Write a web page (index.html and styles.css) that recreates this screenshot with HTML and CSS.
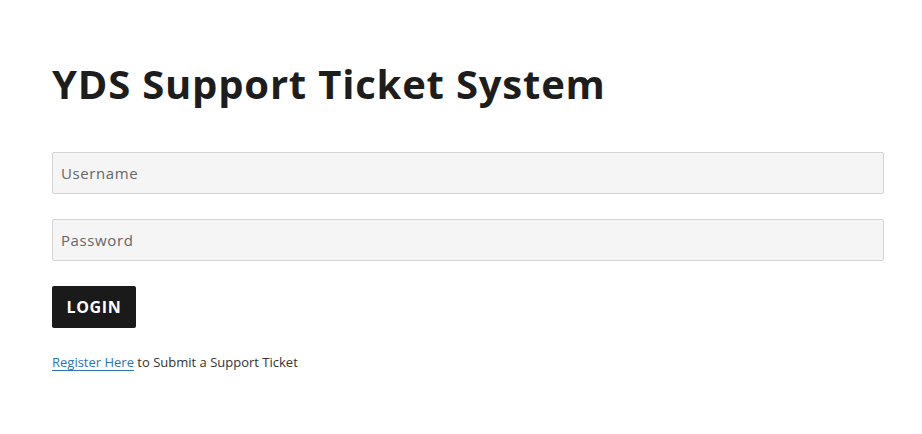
FILE: index.html
```html
<!DOCTYPE html>
<html>
<head>
<meta charset="utf-8">
<link rel="stylesheet" href="styles.css">
</head>
<body>
<main class="page">
  <h1 class="title">YDS Support Ticket System</h1>
  <form class="login-form">
    <input class="field" type="text" placeholder="Username">
    <input class="field" type="password" placeholder="Password">
    <div class="actions"><button class="btn" type="button">LOGIN</button></div>
    <p class="note"><a class="link" href="#">Register Here</a> to Submit a Support Ticket</p>
  </form>
</main>
</body>
</html>
```
FILE: styles.css
```css
html, body {
  margin: 0;
  padding: 0;
  background: #fff;
}
.page {
  padding: 56px 38px 0 52px;
  font-family: "Open Sans", sans-serif;
}
.title {
  margin: 0;
  font-family: "Open Sans", sans-serif;
  font-weight: 700;
  font-size: 40px;
  line-height: 56px;
  color: #1d1d1d;
  letter-spacing: 0.8px;
}
.login-form {
  margin-top: 40px;
  display: flex;
  flex-direction: column;
  gap: 25px;
}
.field {
  box-sizing: border-box;
  width: 832px;
  height: 42px;
  margin: 0;
  padding: 0 8px;
  border: 1px solid #d4d4d4;
  border-radius: 2px;
  background: #f5f5f5;
  font-family: "Open Sans", sans-serif;
  font-size: 15px;
  letter-spacing: 0.6px;
  color: #666;
  outline: none;
}
.field::placeholder {
  color: #666;
}
.btn {
  height: 42px;
  width: 84px;
  border: 0;
  border-radius: 2px;
  background: #1a1a1a;
  color: #fff;
  font-family: "Open Sans", sans-serif;
  font-weight: 700;
  font-size: 16px;
  letter-spacing: 0.7px;
  padding: 0;
}
.note {
  margin: 0;
  font-size: 13px;
  color: #333;
}
.link {
  color: #2a75b3;
  text-decoration: underline;
  text-decoration-thickness: 1px;
  text-underline-offset: 3px;
}
```
